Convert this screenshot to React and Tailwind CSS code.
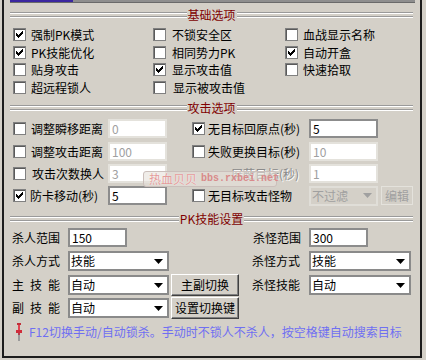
import React from 'react';

const Check = ({ on }) => (
  <span className="relative w-[13px] h-[13px] shrink-0 bg-white border border-[#808080] shadow-[inset_1px_1px_0_#5a5a5a]">
    {on && (
      <svg className="absolute -left-px -top-px" width="13" height="13" viewBox="0 0 13 13" shapeRendering="crispEdges">
        <polygon
          fill="#000"
          points="3,5 4,5 4,6 5,6 5,7 6,7 6,6 7,6 7,5 8,5 8,4 9,4 9,3 10,3 10,6 9,6 9,7 8,7 8,8 7,8 7,9 6,9 6,10 5,10 5,9 4,9 4,8 3,8"
        />
      </svg>
    )}
  </span>
);

const Etched = () => (
  <div className="flex-1 flex flex-col">
    <div className="h-px bg-[#9a9a9a]" />
    <div className="h-px bg-white" />
    <div className="h-[2px]" />
    <div className="h-px bg-[#9a9a9a]" />
    <div className="h-px bg-white" />
  </div>
);

const Header = ({ title, className }) => (
  <div className={`flex items-center h-[14px] ml-[6px] w-[403px] ${className}`}>
    <Etched />
    <span className="px-[1px] text-[#800000] whitespace-nowrap">{title}</span>
    <Etched />
  </div>
);

const Opt = ({ on, label, w, gap = 'gap-[5px]' }) => (
  <div className={`flex items-center ${gap} ${w}`}>
    <Check on={on} />
    <span className="whitespace-nowrap">{label}</span>
  </div>
);

const Input = ({ value, w, disabled }) => (
  <div
    className={`${w} h-[19px] shrink-0 bg-white pl-[2px] pt-[1px] leading-[14px] border-2 ${
      disabled ? 'border-[#e4e2dc] text-[#a0a0a0]' : 'border-[#8c8c8c] text-black'
    }`}
  >
    {value}
  </div>
);

const Arrow = ({ color = '#000' }) => (
  <svg width="9" height="5" viewBox="0 0 9 5">
    <polygon points="0,0 9,0 4.5,5" fill={color} />
  </svg>
);

const Select = ({ value, w, disabled }) => (
  <div
    className={`${w} h-[20px] shrink-0 flex items-center justify-between pl-[1px] pr-[4px] border-2 ${
      disabled ? 'bg-[#d4d0c8] border-[#e0ded8] text-[#a0a0a0]' : 'bg-white border-[#8a8a8a] text-black'
    }`}
  >
    <span>{value}</span>
    <Arrow color={disabled ? '#a0a0a0' : '#000'} />
  </div>
);

const Btn = ({ children, w, h = 'h-[22px]', disabled }) => (
  <div
    className={`${w} ${h} shrink-0 flex items-center justify-center bg-[#d4d0c8] border ${
      disabled
        ? 'border-[#e4e2dc] text-[#a0a0a0]'
        : 'border-t-white border-l-white border-r-[#404040] border-b-[#404040] shadow-[inset_-1px_-1px_0_#808080]'
    }`}
  >
    {children}
  </div>
);

const Spaced = ({ text }) => (
  <div className="w-[48px] flex justify-between">
    {text.split('').map((c, i) => (
      <span key={i}>{c}</span>
    ))}
  </div>
);

const Pin = () => (
  <svg width="8" height="18" viewBox="0 0 8 18">
    <rect x="2" y="0" width="4" height="2" fill="#c0303a" />
    <rect x="3" y="2" width="2" height="5" fill="#e04452" />
    <rect x="1" y="7" width="6" height="3" fill="#d02c3a" />
    <rect x="3" y="10" width="2" height="2" fill="#b04050" />
    <rect x="3" y="12" width="2" height="6" fill="#9a9a9a" />
  </svg>
);

export default function App() {
  return (
    <div className="relative w-[426px] h-[360px] overflow-hidden bg-[#d4d0c8] text-[12px] leading-none text-black font-['Noto_Sans_CJK_SC',sans-serif]">
      <div className="ml-[2px] w-[420px] h-[358px] border-x-2 border-b-2 border-[#1c1c1c]">
        {/* strip cut off at the top */}
        <div className="ml-[6px] w-[405px] flex flex-col">
          <div className="flex h-[2px]">
            <div className="w-[63px] bg-[#3b27a0]" />
            <div className="flex-1 bg-[#8e8e8e]" />
          </div>
          <div className="h-px bg-[#6a6a6a]" />
        </div>

        {/* 基础选项 */}
        <Header title="基础选项" className="mt-[5px]" />
        <div className="ml-[9px] flex items-center h-[13px] mt-[6px]">
          <Opt on label="强制PK模式" w="w-[140px]" />
          <Opt label="不锁安全区" w="w-[132px]" gap="gap-[6px]" />
          <Opt label="血战显示名称" />
        </div>
        <div className="ml-[9px] flex items-center h-[13px] mt-[5px]">
          <Opt on label="PK技能优化" w="w-[140px]" />
          <Opt label="相同势力PK" w="w-[132px]" gap="gap-[6px]" />
          <Opt on label="自动开盒" />
        </div>
        <div className="ml-[9px] flex items-center h-[13px] mt-[4px]">
          <Opt label="贴身攻击" w="w-[140px]" />
          <Opt on label="显示攻击值" w="w-[132px]" gap="gap-[6px]" />
          <Opt label="快速拾取" />
        </div>
        <div className="ml-[9px] flex items-center h-[13px] mt-[5px]">
          <Opt label="超远程锁人" w="w-[140px]" />
          <Opt label="显示被攻击值" w="w-[132px]" gap="gap-[7px]" />
        </div>

        {/* 攻击选项 */}
        <Header title="攻击选项" className="mt-[7px]" />
        <div className="ml-[9px] flex items-center h-[19px] mt-[4px]">
          <Opt label="调整瞬移距离" w="w-[95px]" />
          <Input value="0" w="w-[59px]" disabled />
          <Opt on label="无目标回原点(秒)" w="w-[117px] ml-[25px]" gap="gap-[3px]" />
          <Input value="5" w="w-[69px]" />
        </div>
        <div className="ml-[9px] flex items-center h-[19px] mt-[4px]">
          <Opt label="调整攻击距离" w="w-[95px]" />
          <Input value="100" w="w-[59px]" disabled />
          <Opt label="失败更换目标(秒)" w="w-[117px] ml-[25px]" gap="gap-[3px]" />
          <Input value="10" w="w-[69px]" disabled />
        </div>
        <div className="ml-[9px] flex items-center h-[19px] mt-[3px]">
          <Opt label="攻击次数换人" w="w-[95px]" gap="gap-[6px]" />
          <Input value="3" w="w-[59px]" disabled />
          <div className="w-[117px] ml-[25px] pl-[39px] text-[#8a8a8a] [text-shadow:1px_1px_0_#fff] whitespace-nowrap">
            屏蔽目标(秒)
          </div>
          <Input value="1" w="w-[69px]" disabled />
        </div>
        <div className="ml-[9px] flex items-center h-[19px] mt-[3px]">
          <Opt on label="防卡移动(秒)" w="w-[95px]" gap="gap-[4px]" />
          <Input value="5" w="w-[59px]" />
          <Opt label="无目标攻击怪物" w="w-[117px] ml-[25px]" gap="gap-[3px]" />
          <Select value="不过滤" w="w-[69px]" disabled />
          <Btn w="w-[32px] ml-[3px]" h="h-[19px]" disabled>编辑</Btn>
        </div>

        {/* PK技能设置 */}
        <Header title="PK技能设置" className="mt-[7px]" />
        <div className="ml-[8px] flex items-center h-[19px] mt-[2px]">
          <div className="w-[240px] flex items-center">
            <span className="w-[48px]">杀人范围</span>
            <div className="ml-[8px]"><Input value="150" w="w-[59px]" /></div>
          </div>
          <span className="w-[48px] ml-[1px]">杀怪范围</span>
          <div className="ml-[8px]"><Input value="300" w="w-[59px]" /></div>
        </div>
        <div className="ml-[8px] flex items-center h-[20px] mt-[4px]">
          <div className="w-[240px] flex items-center">
            <span className="w-[48px]">杀人方式</span>
            <div className="ml-[8px]"><Select value="技能" w="w-[101px]" /></div>
          </div>
          <span className="w-[48px]">杀怪方式</span>
          <div className="ml-[9px]"><Select value="技能" w="w-[102px]" /></div>
        </div>
        <div className="ml-[8px] flex items-center h-[22px] mt-[3px]">
          <div className="w-[240px] flex items-center">
            <Spaced text="主技能" />
            <div className="ml-[8px]"><Select value="自动" w="w-[101px]" /></div>
            <Btn w="w-[68px] ml-[2px]">主副切换</Btn>
          </div>
          <span className="w-[48px]">杀怪技能</span>
          <div className="ml-[9px]"><Select value="自动" w="w-[102px]" /></div>
        </div>
        <div className="ml-[8px] flex items-center h-[22px] mt-[1px]">
          <div className="w-[240px] flex items-center">
            <Spaced text="副技能" />
            <div className="ml-[8px]"><Select value="自动" w="w-[101px]" /></div>
            <Btn w="w-[68px] ml-[2px]">设置切换键</Btn>
          </div>
        </div>
        <div className="ml-[11px] flex items-center gap-[6px] h-[20px] mt-[3px]">
          <Pin />
          <span className="text-[#6f6ff2] whitespace-nowrap">
            F12切换手动/自动锁杀。手动时不锁人不杀人，按空格键自动搜索目标
          </span>
        </div>
      </div>

      {/* watermark */}
      <div className="absolute left-[143px] top-[171px] w-[134px] h-[16px] flex items-center gap-[4px] pl-[5px] rounded-[3px] border border-[#cbbfbb] bg-[#e6e1da]/60 whitespace-nowrap">
        <span className="shrink-0 text-[#e49a9a] [text-shadow:0_0_1px_#fff]">热血贝贝</span>
        <span className="shrink-0 text-[#d98a8a] font-bold text-[10px] font-['Liberation_Mono',monospace]">bbs.rxbei.net</span>
      </div>
    </div>
  );
}
